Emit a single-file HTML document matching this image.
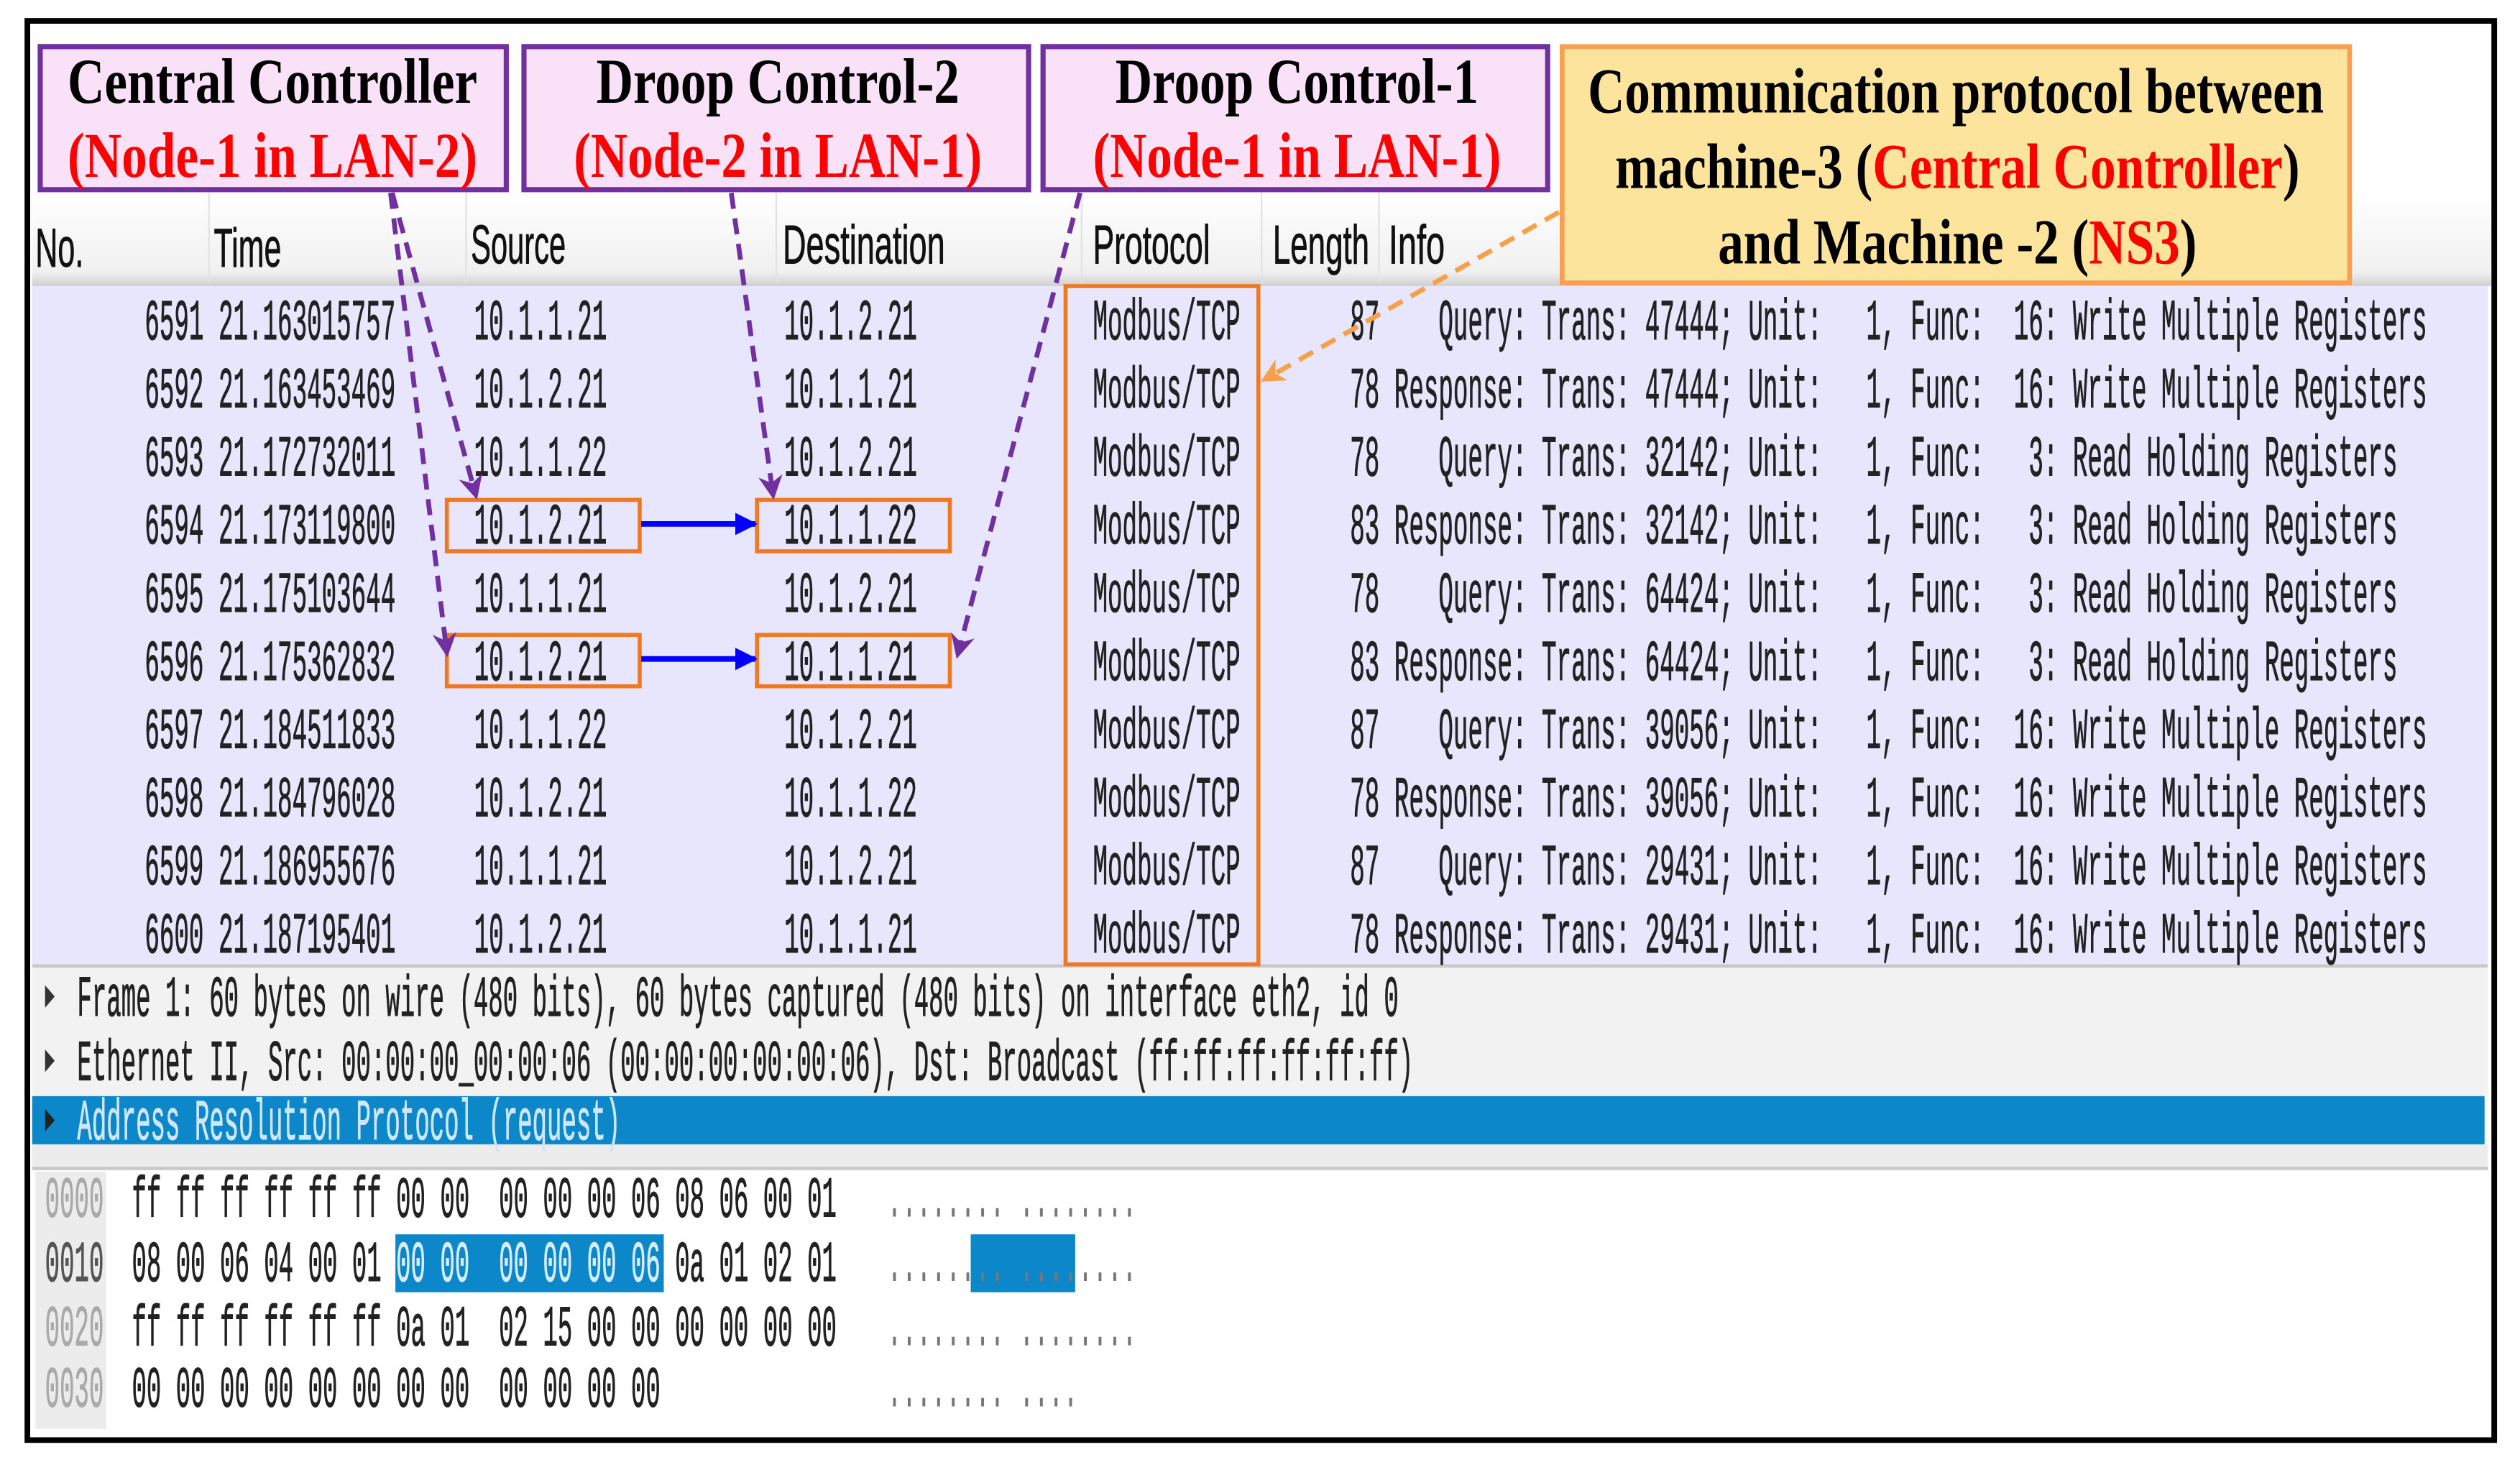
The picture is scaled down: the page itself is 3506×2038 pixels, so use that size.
<!DOCTYPE html>
<html><head><meta charset="utf-8"><style>
html,body{margin:0;padding:0;background:#fff;}
svg{display:block;}
.m{font-family:"Liberation Mono",monospace;font-size:36px;fill:#222;stroke:#222;stroke-width:0.5;white-space:pre;}
.s{font-family:"Liberation Sans",sans-serif;font-size:34px;fill:#111;stroke:#111;stroke-width:0.4;}
.t{font-family:"Liberation Serif",serif;font-weight:bold;font-size:40px;fill:#000;}
.r{fill:#ff0000;}
</style></head><body>
<svg width="3506" height="2038" viewBox="0 0 1568 911.5" xmlns="http://www.w3.org/2000/svg">
<defs>
<linearGradient id="hg" x1="0" y1="0" x2="0" y2="1"><stop offset="0" stop-color="#ffffff"/><stop offset="0.85" stop-color="#f0f0f0"/><stop offset="1" stop-color="#cfcfcf"/></linearGradient>
<marker id="pa" viewBox="0 0 10 10" refX="8" refY="5" markerWidth="5" markerHeight="5" orient="auto"><path d="M0,0 L10,5 L0,10 L3,5 z" fill="#7030a0"/></marker>
<marker id="ba" viewBox="0 0 10 10" refX="9" refY="5" markerWidth="4" markerHeight="4" orient="auto"><path d="M0,0 L10,5 L0,10 z" fill="#0000ff"/></marker>
<marker id="oa" viewBox="0 0 10 10" refX="8" refY="5" markerWidth="5" markerHeight="5" orient="auto"><path d="M0,0 L10,5 L0,10 L3,5 z" fill="#f7a04a"/></marker>
</defs>
<rect x="0" y="0" width="1568" height="911.5" fill="#fff"/>
<rect x="20" y="120" width="1530" height="58" fill="url(#hg)"/>
<g stroke="#e2e2e2" stroke-width="1">
<line x1="130" y1="120" x2="130" y2="176"/><line x1="290" y1="120" x2="290" y2="176"/><line x1="483" y1="120" x2="483" y2="176"/><line x1="673" y1="120" x2="673" y2="176"/><line x1="785" y1="120" x2="785" y2="176"/><line x1="858" y1="120" x2="858" y2="176"/></g>
<g class="s">
<text x="22" y="166" textLength="30" lengthAdjust="spacingAndGlyphs">No.</text>
<text x="133" y="166" textLength="42" lengthAdjust="spacingAndGlyphs">Time</text>
<text x="293" y="164" textLength="59" lengthAdjust="spacingAndGlyphs">Source</text>
<text x="487" y="164" textLength="101" lengthAdjust="spacingAndGlyphs">Destination</text>
<text x="680" y="164" textLength="73" lengthAdjust="spacingAndGlyphs">Protocol</text>
<text x="792" y="164" textLength="60" lengthAdjust="spacingAndGlyphs">Length</text>
<text x="864" y="164" textLength="35" lengthAdjust="spacingAndGlyphs">Info</text>
</g>
<rect x="20" y="178" width="1528" height="422" fill="#e7e6fc"/>
<line x1="20" y1="601" x2="1548" y2="601" stroke="#c8c8c8" stroke-width="2"/>
<g transform="scale(0.425,1)" class="m">
<text xml:space="preserve" y="211"><tspan x="211.8">6591 21.163015757</tspan><tspan x="694.1">10.1.1.21</tspan><tspan x="1148.2">10.1.2.21</tspan><tspan x="1600">Modbus/TCP</tspan><tspan x="1976.5">87    Query: Trans: 47444; Unit:   1, Func:  16: Write Multiple Registers</tspan></text>
<text xml:space="preserve" y="253.4"><tspan x="211.8">6592 21.163453469</tspan><tspan x="694.1">10.1.2.21</tspan><tspan x="1148.2">10.1.1.21</tspan><tspan x="1600">Modbus/TCP</tspan><tspan x="1976.5">78 Response: Trans: 47444; Unit:   1, Func:  16: Write Multiple Registers</tspan></text>
<text xml:space="preserve" y="295.8"><tspan x="211.8">6593 21.172732011</tspan><tspan x="694.1">10.1.1.22</tspan><tspan x="1148.2">10.1.2.21</tspan><tspan x="1600">Modbus/TCP</tspan><tspan x="1976.5">78    Query: Trans: 32142; Unit:   1, Func:   3: Read Holding Registers</tspan></text>
<text xml:space="preserve" y="338.2"><tspan x="211.8">6594 21.173119800</tspan><tspan x="694.1">10.1.2.21</tspan><tspan x="1148.2">10.1.1.22</tspan><tspan x="1600">Modbus/TCP</tspan><tspan x="1976.5">83 Response: Trans: 32142; Unit:   1, Func:   3: Read Holding Registers</tspan></text>
<text xml:space="preserve" y="380.6"><tspan x="211.8">6595 21.175103644</tspan><tspan x="694.1">10.1.1.21</tspan><tspan x="1148.2">10.1.2.21</tspan><tspan x="1600">Modbus/TCP</tspan><tspan x="1976.5">78    Query: Trans: 64424; Unit:   1, Func:   3: Read Holding Registers</tspan></text>
<text xml:space="preserve" y="423"><tspan x="211.8">6596 21.175362832</tspan><tspan x="694.1">10.1.2.21</tspan><tspan x="1148.2">10.1.1.21</tspan><tspan x="1600">Modbus/TCP</tspan><tspan x="1976.5">83 Response: Trans: 64424; Unit:   1, Func:   3: Read Holding Registers</tspan></text>
<text xml:space="preserve" y="465.4"><tspan x="211.8">6597 21.184511833</tspan><tspan x="694.1">10.1.1.22</tspan><tspan x="1148.2">10.1.2.21</tspan><tspan x="1600">Modbus/TCP</tspan><tspan x="1976.5">87    Query: Trans: 39056; Unit:   1, Func:  16: Write Multiple Registers</tspan></text>
<text xml:space="preserve" y="507.8"><tspan x="211.8">6598 21.184796028</tspan><tspan x="694.1">10.1.2.21</tspan><tspan x="1148.2">10.1.1.22</tspan><tspan x="1600">Modbus/TCP</tspan><tspan x="1976.5">78 Response: Trans: 39056; Unit:   1, Func:  16: Write Multiple Registers</tspan></text>
<text xml:space="preserve" y="550.2"><tspan x="211.8">6599 21.186955676</tspan><tspan x="694.1">10.1.1.21</tspan><tspan x="1148.2">10.1.2.21</tspan><tspan x="1600">Modbus/TCP</tspan><tspan x="1976.5">87    Query: Trans: 29431; Unit:   1, Func:  16: Write Multiple Registers</tspan></text>
<text xml:space="preserve" y="592.6"><tspan x="211.8">6600 21.187195401</tspan><tspan x="694.1">10.1.2.21</tspan><tspan x="1148.2">10.1.1.21</tspan><tspan x="1600">Modbus/TCP</tspan><tspan x="1976.5">78 Response: Trans: 29431; Unit:   1, Func:  16: Write Multiple Registers</tspan></text>
</g>
<rect x="20" y="602" width="1528" height="80" fill="#f2f2f2"/>
<rect x="20" y="682" width="1526" height="30" fill="#0c87c9"/>
<rect x="20" y="712" width="1528" height="16" fill="#ececec"/>
<line x1="20" y1="727" x2="1548" y2="727" stroke="#c8c8c8" stroke-width="2"/>
<rect x="22" y="729" width="44" height="160" fill="#ececec"/>
<g fill="#333"><path d="M28,613 L34,620 L28,627 z"/><path d="M28,653 L34,660 L28,667 z"/><path d="M28,690 L34,697 L28,704 z" fill="#222"/></g>
<g transform="scale(0.423,1)" class="m">
<text xml:space="preserve" x="113.5" y="632">Frame 1: 60 bytes on wire (480 bits), 60 bytes captured (480 bits) on interface eth2, id 0</text>
<text xml:space="preserve" x="113.5" y="672">Ethernet II, Src: 00:00:00_00:00:06 (00:00:00:00:00:06), Dst: Broadcast (ff:ff:ff:ff:ff:ff)</text>
<text xml:space="preserve" x="113.5" y="709" style="fill:#cfe6f5;stroke:#cfe6f5">Address Resolution Protocol (request)</text>
</g>
<rect x="246" y="768" width="167" height="36" fill="#0c87c9"/>
<rect x="604" y="768" width="65" height="36" fill="#0c87c9"/>
<g transform="scale(0.423,1)" class="m">
<text xml:space="preserve" y="757"><tspan x="66.2" style="fill:#aaa;stroke:#aaa">0000</tspan><tspan x="193.9">ff ff ff ff ff ff 00 00  00 00 00 06 08 06 00 01</tspan><tspan x="1305" style="fill:#777;stroke:none">........ ........</tspan></text>
<text xml:space="preserve" y="797"><tspan x="66.2" style="fill:#555;stroke:#555">0010</tspan><tspan x="193.9">08 00 06 04 00 01 </tspan><tspan style="fill:#d6ecf8;stroke:#d6ecf8">00 00  00 00 00 06</tspan><tspan> 0a 01 02 01</tspan><tspan x="1305" style="fill:#777;stroke:none">........ ........</tspan></text>
<text xml:space="preserve" y="837"><tspan x="66.2" style="fill:#aaa;stroke:#aaa">0020</tspan><tspan x="193.9">ff ff ff ff ff ff 0a 01  02 15 00 00 00 00 00 00</tspan><tspan x="1305" style="fill:#777;stroke:none">........ ........</tspan></text>
<text xml:space="preserve" y="875"><tspan x="66.2" style="fill:#aaa;stroke:#aaa">0030</tspan><tspan x="193.9">00 00 00 00 00 00 00 00  00 00 00 00</tspan><tspan x="1305" style="fill:#777;stroke:none">........ ....</tspan></text>
</g>
<g fill="none" stroke="#f07820" stroke-width="2.5">
<rect x="278" y="311" width="120" height="32"/><rect x="278" y="395" width="120" height="32"/>
<rect x="471" y="311" width="120" height="32"/><rect x="471" y="395" width="120" height="32"/>
<rect x="663" y="178" width="120" height="422"/>
</g>
<g stroke="#0000ff" stroke-width="3.5" marker-end="url(#ba)"><line x1="399" y1="326" x2="470" y2="326"/><line x1="399" y1="410" x2="470" y2="410"/></g>
<g stroke="#7030a0" stroke-width="3" stroke-dasharray="10,6" fill="none" marker-end="url(#pa)">
<line x1="244" y1="120" x2="296" y2="308"/>
<line x1="243" y1="120" x2="278" y2="406"/>
<line x1="455" y1="120" x2="481" y2="308"/>
<line x1="672" y1="120" x2="596" y2="407"/>
</g>
<line x1="970" y1="132" x2="787" y2="236" stroke="#f7a04a" stroke-width="3" stroke-dasharray="10,6" marker-end="url(#oa)"/>
<g stroke="#7030a0" stroke-width="3.2" fill="#f9e1f7">
<rect x="25" y="29" width="290" height="89"/><rect x="326" y="29" width="314" height="89"/><rect x="649" y="29" width="314" height="89"/>
</g>
<rect x="972" y="29" width="490" height="147" fill="#fde49c" stroke="#f9a050" stroke-width="3"/>
<g class="t">
<text x="42" y="64" textLength="255" lengthAdjust="spacingAndGlyphs">Central Controller</text>
<text x="42" y="110" textLength="255" lengthAdjust="spacingAndGlyphs" class="r">(Node-1 in LAN-2)</text>
<text x="371" y="64" textLength="226" lengthAdjust="spacingAndGlyphs">Droop Control-2</text>
<text x="357" y="110" textLength="254" lengthAdjust="spacingAndGlyphs" class="r">(Node-2 in LAN-1)</text>
<text x="694" y="64" textLength="226" lengthAdjust="spacingAndGlyphs">Droop Control-1</text>
<text x="680" y="110" textLength="254" lengthAdjust="spacingAndGlyphs" class="r">(Node-1 in LAN-1)</text>
<text x="988" y="70" textLength="458" lengthAdjust="spacingAndGlyphs">Communication protocol between</text>
<text x="1005" y="117" textLength="426" lengthAdjust="spacingAndGlyphs">machine-3 (<tspan class="r">Central Controller</tspan>)</text>
<text x="1069" y="164" textLength="298" lengthAdjust="spacingAndGlyphs">and Machine -2 (<tspan class="r">NS3</tspan>)</text>
</g>
<rect x="17" y="13" width="1535" height="883" fill="none" stroke="#000" stroke-width="3.5"/>
</svg>
</body></html>
